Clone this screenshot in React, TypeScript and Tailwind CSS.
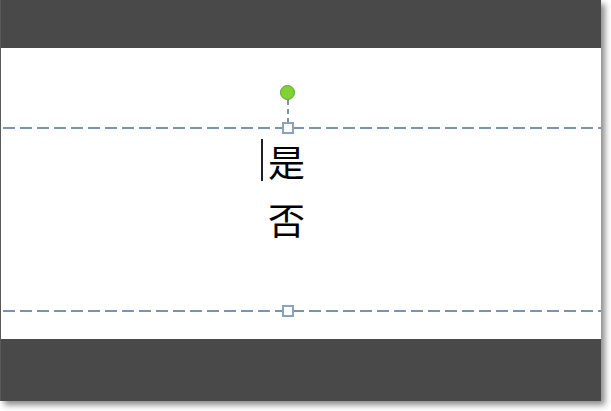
export default function App() {
  return (
    <div className="w-[611px] h-[411px] bg-white">
      <div className="w-[601px] h-[401px] flex flex-col bg-[#494949] border-l border-[#5a5a5a] shadow-[4px_4px_6px_rgba(0,0,0,0.45)]">
        <div className="h-[48px] shrink-0" />
        <div className="relative h-[291px] shrink-0 bg-white">
          {/* selection box */}
          <div className="absolute left-[2px] right-0 top-[79px] h-[2px] bg-[repeating-linear-gradient(to_right,#7894b0_0_12px,transparent_12px_17px)]" />
          <div className="absolute left-[2px] right-0 top-[262px] h-[2px] bg-[repeating-linear-gradient(to_right,#7894b0_0_12px,transparent_12px_17px)]" />
          <div className="absolute left-[286px] top-[52px] w-[2px] h-[23px] bg-[repeating-linear-gradient(to_bottom,#7894b0_0_5px,transparent_5px_9px)]" />
          <div className="absolute left-[281px] top-[74px] w-[12px] h-[12px] bg-white border-2 border-[#8aa2ba]" />
          <div className="absolute left-[281px] top-[257px] w-[12px] h-[12px] bg-white border-2 border-[#8aa2ba]" />
          <div className="absolute left-[279px] top-[37px] w-[15px] h-[15px] rounded-full bg-[#7fd334] border border-[#5f9e2c]" />

          {/* text */}
          <div className="flex flex-col items-center pt-[84px] pr-[29px] text-[37px] leading-[58px] text-black" style={{ fontFamily: '"Noto Sans CJK SC", sans-serif' }}>
            <div className="relative">
              <span className="absolute left-[-7px] top-[7px] w-[2px] h-[42px] bg-[#222]" />
              是
            </div>
            <div>否</div>
          </div>
        </div>
        <div className="flex-1" />
      </div>
    </div>
  );
}
